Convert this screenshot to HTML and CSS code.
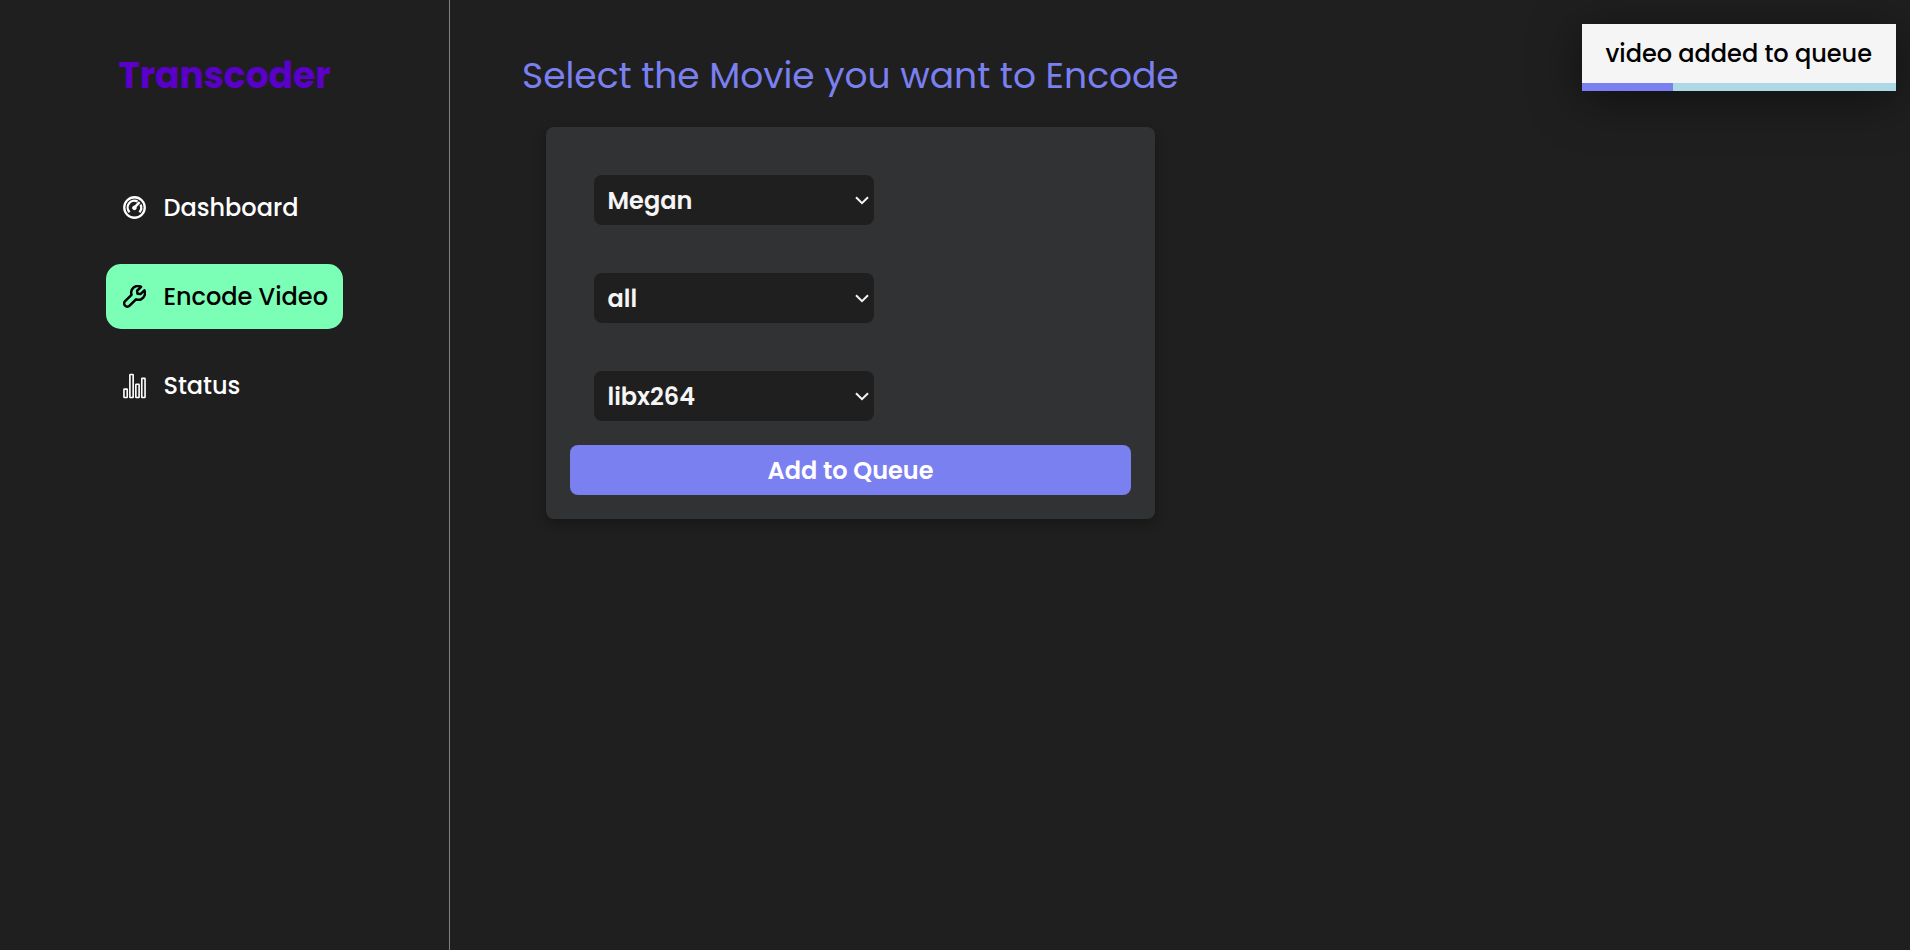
FILE: index.html
```html
<!DOCTYPE html>
<html lang="en">
<head>
<meta charset="utf-8">
<title>Transcoder</title>
<link rel="stylesheet" href="styles.css">
</head>
<body>
<aside class="sidebar">
  <h1 class="brand">Transcoder</h1>
  <nav class="nav">
    <a class="nav-item"><svg class="icon" viewBox="0 0 24 24" fill="none" stroke="currentColor" stroke-width="2.4"><circle cx="12" cy="12" r="10.7"/><path d="M6.900 16.900A7 7 0 0 1 15.200 5.800M18.300 9a7 7 0 0 1-1.200 7.900"/><path d="M12 12l5.300-5.700" stroke-width="2.600"/><circle cx="11.900" cy="12.400" r="1.900" fill="currentColor" stroke-width="1"/></svg><span class="label">Dashboard</span></a>
    <a class="nav-item active"><svg class="icon" viewBox="0 0 24 24" fill="none" stroke="currentColor" stroke-width="2.6" stroke-linejoin="round" stroke-linecap="round"><path d="M18.900 1.900A7 7 0 0 0 8.900 10.200L2.200 16.900a3.100 3.100 0 0 0 4.700 4.700L13.600 15A7 7 0 0 0 22.300 5.500L18.200 9.500 15.200 9.100 14.700 6Z"/></svg><span class="label">Encode Video</span></a>
    <a class="nav-item"><svg class="icon bars" viewBox="0 0 24 26" fill="none" stroke="currentColor" stroke-width="1.700"><rect x="1" y="16.200" width="3.400" height="8.800" rx=".4"/><rect x="7.200" y="1" width="3.400" height="24" rx=".4"/><rect x="13.400" y="11.200" width="3.400" height="13.800" rx=".4"/><rect x="19.600" y="5" width="3.400" height="20" rx=".4"/></svg><span class="label">Status</span></a>
  </nav>
</aside>
<main class="content">
  <h2 class="heading">Select the Movie you want to Encode</h2>
  <form class="card">
    <div class="select"><span>Megan</span><svg class="chevron" viewBox="0 0 14 9"><path d="M1 1.200l6 6 6-6"/></svg></div>
    <div class="select"><span>all</span><svg class="chevron" viewBox="0 0 14 9"><path d="M1 1.200l6 6 6-6"/></svg></div>
    <div class="select"><span>libx264</span><svg class="chevron" viewBox="0 0 14 9"><path d="M1 1.200l6 6 6-6"/></svg></div>
    <button class="submit" type="button">Add to Queue</button>
  </form>
</main>
<div class="toast"><p class="message">video added to queue</p><div class="progress"><div class="progress-fill" style="width:29%"></div></div></div>
</body>
</html>
```
FILE: styles.css
```css
* { box-sizing: border-box; }
body {
  margin: 0;
  height: 100vh;
  display: flex;
  overflow: hidden;
  background: #1f1f1f;
  color: #fff;
  font-family: Poppins, Inter, sans-serif;
  font-size: 24px;
  white-space: nowrap;
}
.sidebar {
  width: 450px;
  flex: none;
  border-right: 1px solid #808080;
  display: flex;
  flex-direction: column;
  align-items: center;
  padding-top: 49px;
}
.brand { margin: 0; font-size: 36px; line-height: 54px; font-weight: 700; color: #5a00c8; }
.nav { width: 237px; margin-top: 72px; display: flex; flex-direction: column; gap: 24px; }
.nav-item { height: 65px; padding: 0 14px 0 17px; border-radius: 15px; display: flex; align-items: center; gap: 17.4px; }
.active { background: #7bffb7; color: #000; }
.icon { width: 23px; height: 23px; flex: none; }
.bars { height: 26px; }
.label { font-weight: 500; line-height: 36px; }
.content { padding: 49px 0 0 72px; }
.heading { margin: 0; font-size: 36px; line-height: 54px; font-weight: 400; color: #7b80f0; }
.card {
  width: 609px;
  height: 392px;
  margin: 24px 0 0 24px;
  padding: 48px 24px 24px;
  border-radius: 8px;
  background: #313234;
  box-shadow: 0 4px 12px rgba(0, 0, 0, .3);
  display: flex;
  flex-direction: column;
}
.select {
  width: 280px;
  height: 50px;
  margin: 0 0 48px 24px;
  padding: 0 5px 0 13.5px;
  border-radius: 8px;
  background: #1f1f1f;
  color: #f5f5f5;
  font-weight: 600;
  display: flex;
  align-items: center;
  justify-content: space-between;
}
.select:nth-child(3) { margin-bottom: 24px; }
.chevron { width: 14px; height: 9px; fill: none; stroke: #f5f5f5; stroke-width: 2; }
.submit { height: 50px; padding: 0; border: 0; border-radius: 8px; background: #7b80f0; color: #fff; font: inherit; font-weight: 600; }
.toast { position: absolute; top: 24px; right: 14px; width: 314px; height: 67px; background: #f5f5f5; color: #000; box-shadow: 0 8px 48px rgba(0, 0, 0, .5); }
.message { margin: 0; height: 59px; line-height: 60px; padding-left: 23.5px; font-weight: 500; }
.progress { height: 8px; background: #add8e6; }
.progress-fill { height: 8px; background: #7b80f0; }
```
